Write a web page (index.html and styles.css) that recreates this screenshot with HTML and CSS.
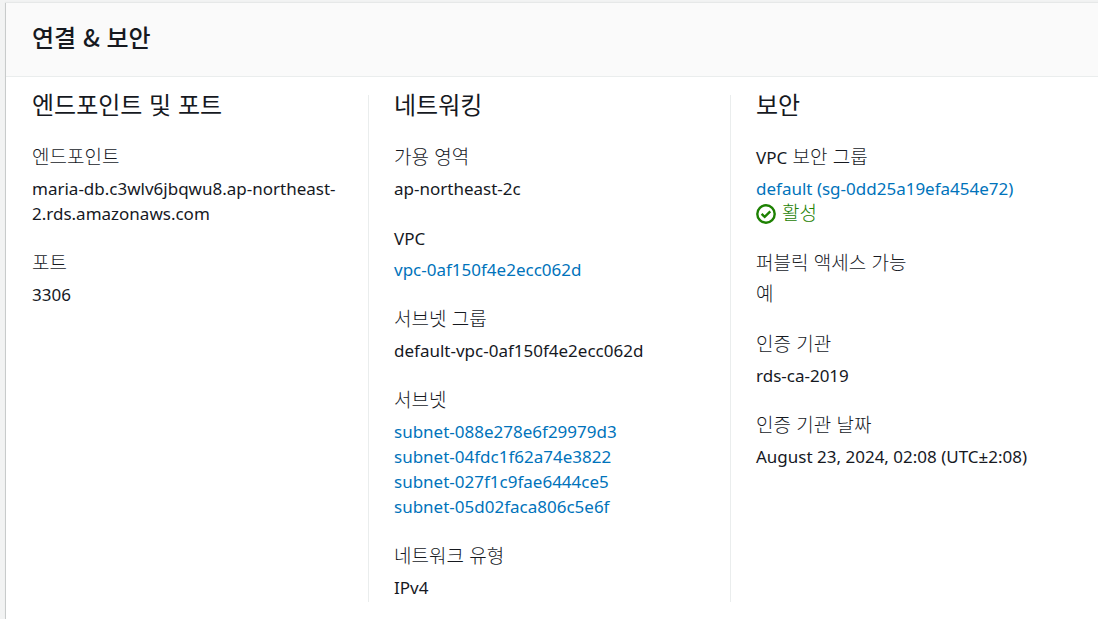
FILE: index.html
```html
<!DOCTYPE html>
<html lang="ko">
<head>
<meta charset="utf-8">
<meta name="viewport" content="width=device-width, initial-scale=1">
<title>연결 &amp; 보안</title>
<link rel="stylesheet" href="styles.css">
</head>
<body>
<main class="panel">
  <header class="panel-header">
    <h2 class="panel-title">연결 &amp; 보안</h2>
  </header>
  <div class="columns">
    <section class="column">
      <h3 class="column-title">엔드포인트 및 포트</h3>
      <dl class="fields">
        <div class="field"><dt class="label">엔드포인트</dt><dd class="value">maria-db.c3wlv6jbqwu8.ap-northeast-2.rds.amazonaws.com</dd></div>
        <div class="field"><dt class="label">포트</dt><dd class="value">3306</dd></div>
      </dl>
    </section>
    <section class="column">
      <h3 class="column-title">네트워킹</h3>
      <dl class="fields">
        <div class="field"><dt class="label">가용 영역</dt><dd class="value">ap-northeast-2c</dd></div>
        <div class="field"><dt class="label label-latin">VPC</dt><dd class="value"><a class="link" href="#vpc">vpc-0af150f4e2ecc062d</a></dd></div>
        <div class="field"><dt class="label">서브넷 그룹</dt><dd class="value">default-vpc-0af150f4e2ecc062d</dd></div>
        <div class="field">
          <dt class="label">서브넷</dt>
          <dd class="value"><a class="link" href="#subnet-1">subnet-088e278e6f29979d3</a></dd>
          <dd class="value"><a class="link" href="#subnet-2">subnet-04fdc1f62a74e3822</a></dd>
          <dd class="value"><a class="link" href="#subnet-3">subnet-027f1c9fae6444ce5</a></dd>
          <dd class="value"><a class="link" href="#subnet-4">subnet-05d02faca806c5e6f</a></dd>
        </div>
        <div class="field"><dt class="label">네트워크 유형</dt><dd class="value">IPv4</dd></div>
      </dl>
    </section>
    <section class="column">
      <h3 class="column-title">보안</h3>
      <dl class="fields">
        <div class="field">
          <dt class="label"><span class="latin">VPC</span> 보안 그룹</dt>
          <dd class="value"><a class="link" href="#sg">default (sg-0dd25a19efa454e72)</a></dd>
          <dd class="value status">
            <svg class="status-icon" viewBox="0 0 20 20" aria-hidden="true"><circle cx="10" cy="10" r="8.7"/><path d="M5.6 9.9l3.1 3 5.6-5.5"/></svg>
            <span class="status-text">활성</span>
          </dd>
        </div>
        <div class="field"><dt class="label">퍼블릭 액세스 가능</dt><dd class="value korean">예</dd></div>
        <div class="field"><dt class="label">인증 기관</dt><dd class="value">rds-ca-2019</dd></div>
        <div class="field"><dt class="label">인증 기관 날짜</dt><dd class="value">August 23, 2024, 02:08 (UTC±2:08)</dd></div>
      </dl>
    </section>
  </div>
</main>
</body>
</html>
```
FILE: styles.css
```css
* { box-sizing: border-box; }

body {
  margin: 0;
  padding: 3px 0 0 5px;
  min-height: 100vh;
  display: flex;
  background: #f2f3f3;
  color: #16191f;
  font-family: "Noto Sans", "Noto Sans CJK KR", sans-serif;
  font-size: 17px;
  line-height: 25px;
}

.panel {
  flex: 1;
  min-width: 0;
  background: #fff;
  border-left: 1px solid #c8cbcb;
  box-shadow: 0 -1px 1px #e6e8e8;
}

.panel-header {
  padding: 16px 26px 21px;
  background: #fafafa;
  border-bottom: 1px solid #eaeded;
}

.panel-title,
.column-title {
  margin: 0;
  font-family: "Noto Sans CJK KR", sans-serif;
  font-size: 24px;
  line-height: 36px;
}

.panel-title { font-weight: 500; }
.column-title { font-weight: 400; line-height: 18px; }

.columns {
  display: grid;
  grid-template-columns: repeat(3, minmax(0, 1fr));
  padding: 18px 6px 16px 0;
}

.column { padding: 0 25px 2px 26px; }

.column + .column {
  padding-left: 25px;
  border-left: 1px solid #eaeded;
}

.fields {
  display: flex;
  flex-direction: column;
  gap: 25px;
  margin: 32px 0 0;
}

.label {
  margin-bottom: 10px;
  font-family: "Noto Sans CJK KR", sans-serif;
  font-size: 19px;
  font-weight: 300;
  line-height: 21px;
}

.label-latin,
.latin {
  font-family: "Noto Sans", sans-serif;
  font-size: 17px;
  font-weight: 400;
}

.label-latin {
  margin-bottom: 6px;
  line-height: 25px;
}

.latin { line-height: 1; }

.value { margin: 0; }

.korean,
.status-text {
  padding-bottom: 4px;
  font-family: "Noto Sans CJK KR", sans-serif;
  font-size: 19px;
  font-weight: 300;
  line-height: 21px;
}

.link {
  color: #0073bb;
  text-decoration: none;
}

.status {
  display: flex;
  align-items: center;
  gap: 6px;
  color: #1d8102;
}

.status-icon {
  width: 20px;
  height: 20px;
  fill: none;
  stroke: #1d8102;
  stroke-width: 2.4;
}
```
